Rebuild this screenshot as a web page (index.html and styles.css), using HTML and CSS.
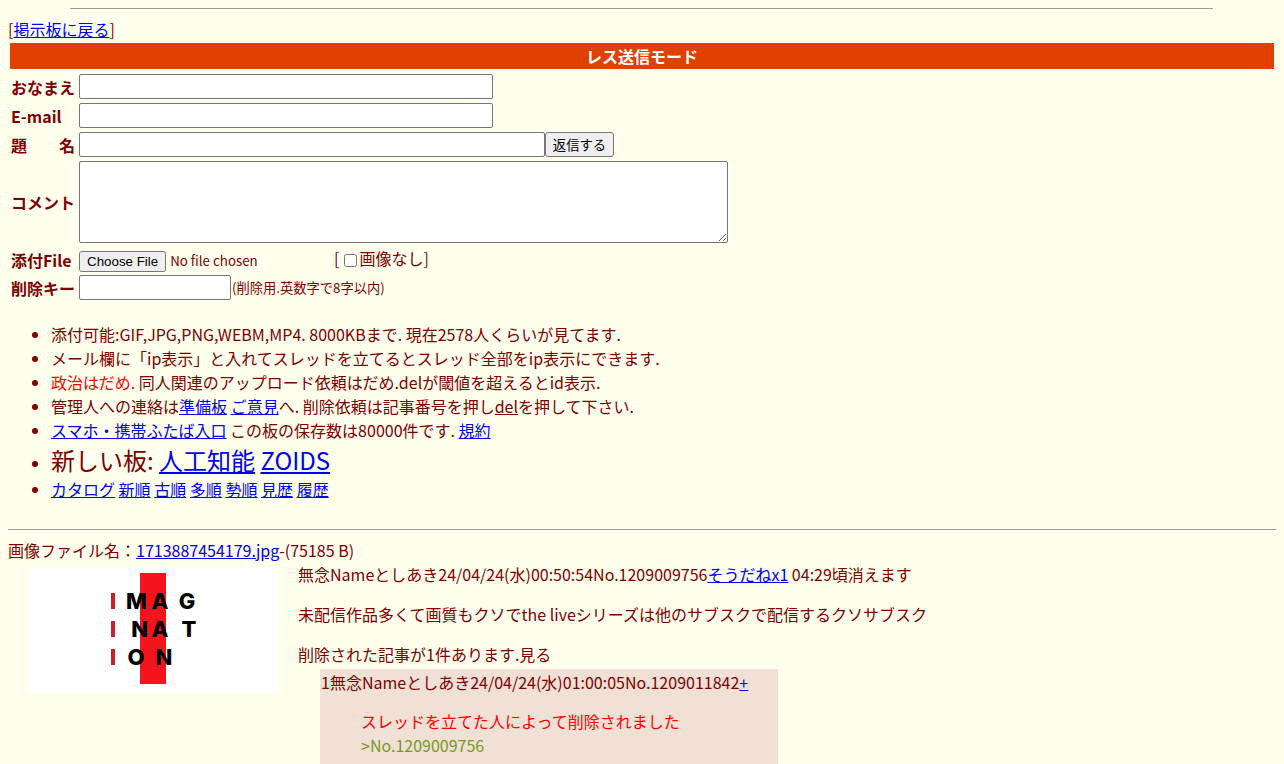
FILE: index.html
```html
<!DOCTYPE html>
<html lang="ja">
<head>
<meta charset="utf-8">
<title>レス送信モード</title>
<link rel="stylesheet" href="styles.css">
</head>
<body>
<hr class="top-rule">
<div class="back">[<a href="#">掲示板に戻る</a>]</div>
<div class="mode">レス送信モード</div>
<form class="post-form">
<table class="form-table">
<tr><th>おなまえ</th><td><input class="field-name" type="text"></td></tr>
<tr><th>E-mail</th><td><input class="field-name" type="text"></td></tr>
<tr><th class="justify"><span>題</span><span>名</span></th><td class="row-inline"><input class="field-sub" type="text"><button class="submit" type="button">返信する</button></td></tr>
<tr><th>コメント</th><td><textarea class="field-com"></textarea></td></tr>
<tr class="file-row"><th>添付File</th><td><input class="field-file" type="file"><span class="noimg">[<label><input class="check" type="checkbox">画像なし</label>]</span></td></tr>
<tr><th>削除キー</th><td><input class="field-pwd" type="password"><span class="hint">(削除用.英数字で8字以内)</span></td></tr>
</table>
</form>
<ul class="rules">
<li>添付可能:GIF,JPG,PNG,WEBM,MP4. 8000KBまで. 現在2578人くらいが見てます.</li>
<li>メール欄に「ip表示」と入れてスレッドを立てるとスレッド全部をip表示にできます.</li>
<li><span class="red">政治はだめ.</span> 同人関連のアップロード依頼はだめ.delが閾値を超えるとid表示.</li>
<li>管理人への連絡は<a href="#">準備板</a> <a href="#">ご意見</a>へ. 削除依頼は記事番号を押し<u>del</u>を押して下さい.</li>
<li><a href="#">スマホ・携帯ふたば入口</a> この板の保存数は80000件です. <a href="#">規約</a></li>
<li class="big-row"><span class="big">新しい板: <a href="#">人工知能</a> <a href="#">ZOIDS</a></span></li>
<li><a href="#">カタログ</a> <a href="#">新順</a> <a href="#">古順</a> <a href="#">多順</a> <a href="#">勢順</a> <a href="#">見歴</a> <a href="#">履歴</a></li>
</ul>
<hr class="thread-rule">
<div class="thread">
<div class="file-line">画像ファイル名：<a href="#">1713887454179.jpg</a>-(75185 B)</div>
<div class="thumb">
<svg width="250" height="125" viewBox="0 0 250 125" role="img" aria-label="IMAGINATION">
<rect width="250" height="125" fill="#fff"/>
<rect x="112" y="5" width="26" height="111" fill="#f5141b"/>
<rect x="83" y="25" width="4" height="16" fill="#c8202c"/>
<rect x="83" y="53" width="4" height="16" fill="#c8202c"/>
<rect x="83" y="81" width="4" height="16" fill="#c8202c"/>
<g class="logo-text">
<text x="108.5" y="41">M</text><text x="132" y="41">A</text><text x="159" y="41">G</text>
<text x="111.7" y="69">N</text><text x="132" y="69">A</text><text x="161" y="69">T</text>
<text x="108" y="97">O</text><text x="136" y="97">N</text>
</g>
</svg>
</div>
<div class="post-body">
<div>無念Nameとしあき24/04/24(水)00:50:54No.1209009756<a href="#">そうだねx1</a> 04:29頃消えます</div>
<p class="op-text">未配信作品多くて画質もクソでthe liveシリーズは他のサブスクで配信するクソサブスク</p>
<div class="deleted">削除された記事が1件あります.見る</div>
<div class="reply">
<div class="reply-head">1無念Nameとしあき24/04/24(水)01:00:05No.1209011842<a href="#">+</a></div>
<div class="reply-text"><span class="red">スレッドを立てた人によって削除されました</span><br><span class="quote">&gt;No.1209009756</span></div>
</div>
</div>
</div>
</body>
</html>
```
FILE: styles.css
```css
html, body { overflow: hidden; height: 764px; }
body {
  margin: 8px;
  background: #ffffee;
  color: #800000;
  font-family: "Noto Sans CJK JP", "Noto Sans", sans-serif;
  font-size: 16px;
  line-height: 24px;
}
a { color: #0000ee; }
.red { color: #ff0000; }
.quote { color: #789922; }
.top-rule {
  width: 1143px;
  margin: 0 0 0 62px;
  border: 0;
  border-top: 1px solid #999;
  height: 0;
}
.back { margin-top: 8px; height: 26px; }
.mode {
  margin: 0 2px;
  height: 26px;
  background: #e04000;
  color: #fff;
  font-weight: bold;
  text-align: center;
  line-height: 26px;
}
.post-form { margin: 0; }
.form-table { border-collapse: separate; border-spacing: 2px; margin-top: 2px; }
.form-table th, .form-table td { padding: 1px; line-height: 24px; vertical-align: middle; }
.form-table th { text-align: left; color: #800000; white-space: nowrap; }
.form-table td { font-size: 16px; }
.form-table .file-row th, .form-table .file-row td { line-height: 22px; padding-bottom: 0; }
.justify span + span { float: right; }
.form-table input[type=text], .form-table input[type=password], .form-table textarea {
  box-sizing: border-box;
  display: inline-block;
  border: 1px solid #767676;
  border-radius: 2px;
  margin: 0;
  padding: 1px 2px;
  background: #fff;
  vertical-align: top;
}
.form-table input[type=text], .form-table input[type=password] { height: 25px; }
.field-name { width: 414px; }
.field-sub { width: 466px; }
.field-pwd { width: 152px; }
.field-com { width: 649px; height: 82px; vertical-align: top; }
.row-inline { white-space: nowrap; }
.submit {
  box-sizing: border-box;
  height: 25px;
  width: 69px;
  font: 13.33px "Noto Sans CJK JP", sans-serif;
  padding: 0;
  margin: 0;
  vertical-align: top;
  border: 1px solid #767676;
  border-radius: 3px;
  background: #efefef;
  color: #000;
}
.field-file {
  width: 252px;
  font-family: "Noto Sans CJK JP", sans-serif;
  font-size: 13.33px;
  margin: 0;
  color: #800000;
  vertical-align: middle;
}
.field-file::file-selector-button {
  font-family: "Liberation Sans", Arial, sans-serif;
  font-size: 13.33px;
}
.noimg { margin-left: 3px; vertical-align: 1px; }
.check { margin: 0 2px 0 5px; vertical-align: middle; }
.hint { font-size: 13.28px; margin-left: 1px; vertical-align: 1px; }
.rules { margin: 19px 0 0; padding: 0 0 0 43px; height: 180px; }
.rules li { height: 24px; }
.rules li.big-row { height: 35px; line-height: 36px; }
.big { font-size: 24px; }
.thread-rule { border: 0; border-top: 1px solid #999; height: 0; margin: 27px 0 0; background: none; }
.thread { margin-top: 8px; }
.file-line { height: 24px; margin-top: 0; }
.thumb { float: left; margin: 0 20px 0 20px; height: 125px; padding-top: 6px; }
.thumb svg { display: block; }
.logo-text text { font: 800 22px "Inter", sans-serif; fill: #000; text-anchor: middle; }
.post-body { padding-top: 0; margin-left: 290px; }
.op-text { margin: 16px 0; }
.deleted { height: 27px; }
.reply { margin: 0 0 0 22px; width: 458px; background: #f0e0d6; height: 100px; padding-top: 1px; box-sizing: border-box; }
.reply-head { padding-left: 1px; }
.reply-text { margin: 15px 0 0 41px; }
```
